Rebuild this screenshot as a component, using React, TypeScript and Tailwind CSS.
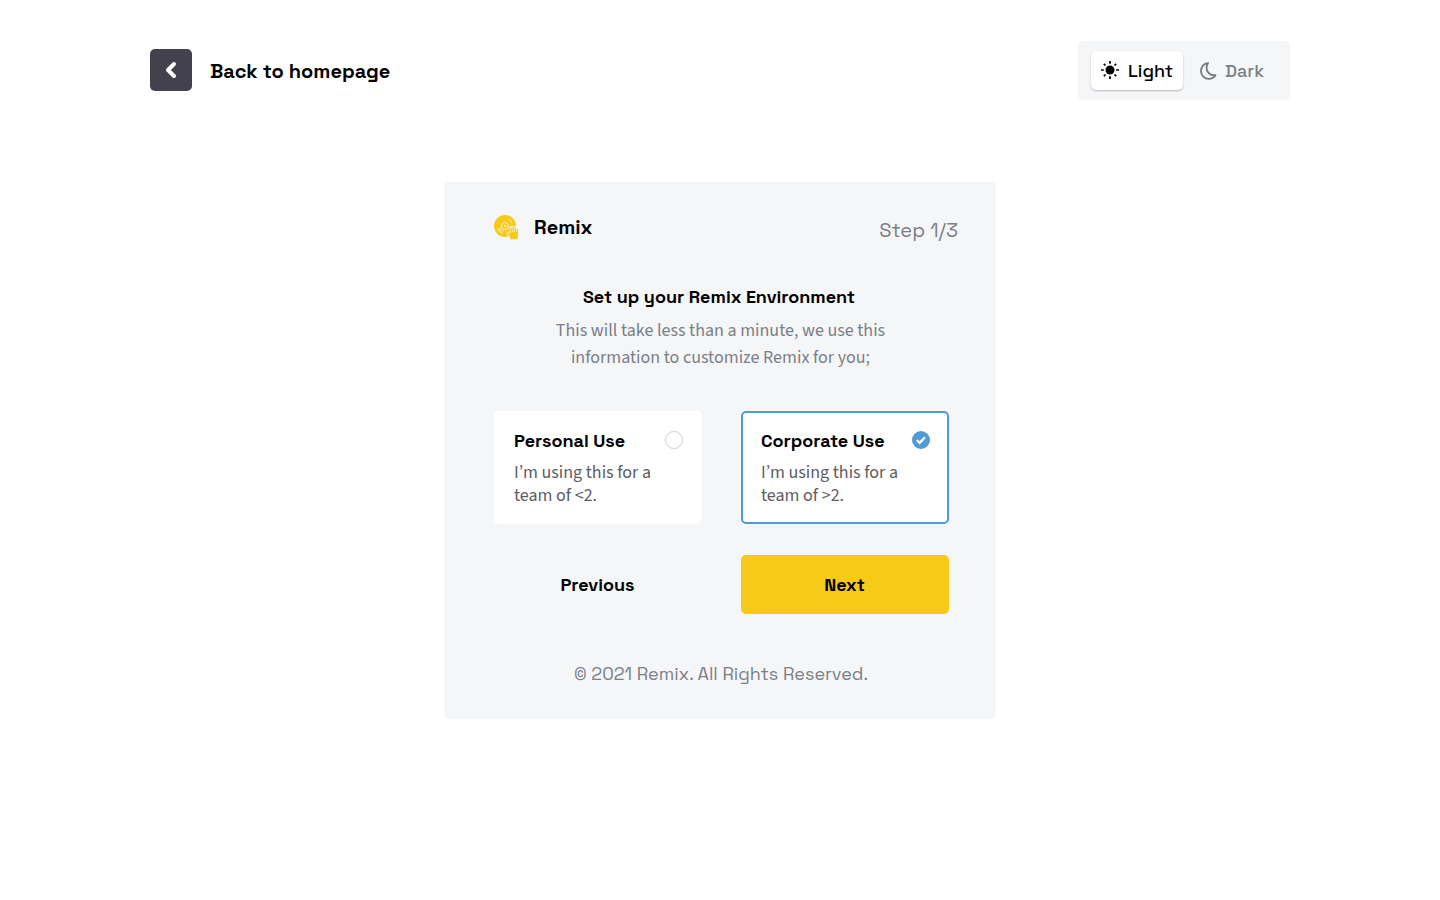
import React from 'react';

const grotesk = "font-['Space_Grotesk',Inter,sans-serif]";
const source = "font-['Source_Sans_Pro','Source_Sans_3','Noto_Sans_CJK_SC',sans-serif]";

function SunIcon() {
  return (
    <svg width="18" height="18" viewBox="0 0 18 18" fill="none" stroke="#000" strokeWidth="1.7" className="mb-[2px]">
      <circle cx="9" cy="9" r="4.5" fill="#000" stroke="none" />
      <path d="M9 0v2.8M9 15.2V18M0 9h2.8M15.2 9H18M2.8 2.8l1.7 1.7M13.5 13.5l1.7 1.7M2.8 15.2l1.7-1.7M13.5 4.5l1.7-1.7" />
    </svg>
  );
}

function MoonIcon() {
  return (
    <svg width="17" height="18" viewBox="0 0 17 18" fill="none" stroke="#747981" strokeWidth="1.8" strokeLinejoin="round">
      <path d="M8.1 1.100C3.900 1.400 1 4.800 1 8.900c0 4.500 3.500 8 7.800 8 2.900 0 5.200-1.300 6.700-3.700-3.300.300-6.200-.900-7.800-3.500C6.100 7 6.300 3.800 8.100 1.100Z" />
    </svg>
  );
}

function RemixLogo() {
  return (
    <svg width="25" height="25" viewBox="0 0 25 25" fill="none">
      <circle cx="11" cy="11" r="11" fill="#f8ca18" />
      <g stroke="#f5f6f8" strokeWidth=".85">
        <circle cx="11" cy="11" r="3.500" />
        <path d="M3.700 13.300a7.700 7.700 0 0 0 5 5M5.800 12.800a5.500 5.500 0 0 0 3.400 3.400M14 3.900a7.700 7.700 0 0 1 4.100 4.100" />
      </g>
      <circle cx="11" cy="11" r="1.100" fill="#f5f6f8" />
      <path
        d="M16.200 24.200v-1.500l-2.900-4c-.7-1.200.8-2.200 1.700-1.100l1.200 1.300v-7.200h7.600v8.800c0 1.200-.4 1.700-.4 2.500v1.200Z"
        fill="#f5f6f8"
        stroke="#f5f6f8"
        strokeWidth="1"
        strokeLinejoin="round"
      />
      <path
        d="M16.300 24.200v-1.500l-2.700-4c-.5-.9.600-1.600 1.300-.8l1.600 1.700v-2.600h7.400v3.500c0 1.200-.4 1.700-.4 2.500v1.200Z"
        fill="#f8ca18"
      />
      <path d="M17.200 18v-4.900M19.200 18v-5.800M21.200 18v-5.400M23.200 18v-3.500" stroke="#f8ca18" strokeWidth="1.350" strokeLinecap="round" />
    </svg>
  );
}

function UseCard({ title, team, selected }: { title: string; team: string; selected?: boolean }) {
  return (
    <button
      className={
        selected
          ? 'flex h-[113px] w-[208px] flex-col rounded-[5px] border-2 border-[#4f9bd5] bg-white pt-[17px] pr-[17px] pl-[18px] text-left'
          : 'flex h-[113px] w-[208px] flex-col rounded-[5px] bg-white pt-[19px] pr-[19px] pl-5 text-left'
      }
    >
      <span className="flex w-full items-start justify-between">
        <span className={`${grotesk} text-[18px] leading-[22px] font-bold whitespace-nowrap`}>{title}</span>
        {selected ? (
          <svg width="18" height="18" viewBox="0 0 18 18" fill="none" className="mt-px">
            <circle cx="9" cy="9" r="9" fill="#4f9bd5" />
            <path d="m4.800 9 2.800 2.800 5.400-5.500" stroke="#fff" strokeWidth="2.300" />
          </svg>
        ) : (
          <span className="mt-px size-[18px] rounded-full border border-[#cfcfcf]" />
        )}
      </span>
      <span className={`${source} mt-[9px] text-[18px] leading-[23px] whitespace-nowrap text-[#5d5d5f]`}>
        I’m using this for a<br />
        {team}
      </span>
    </button>
  );
}

export default function App() {
  return (
    <div className={`${grotesk} h-[900px] w-full overflow-hidden bg-white text-black`}>
      <header className="flex items-center justify-between px-[150px] pt-[41px]">
        <a className="flex items-center gap-[18px]">
          <span className="mb-[2px] flex size-[42px] items-center justify-center rounded-[5px] bg-[#42414d]">
            <svg width="12" height="18" viewBox="0 0 12 18" fill="none" stroke="#fff" strokeWidth="4" strokeLinecap="round" strokeLinejoin="round">
              <path d="m9 3-6 6 6 6" />
            </svg>
          </span>
          <span className="text-[20px] leading-6 font-semibold whitespace-nowrap">Back to homepage</span>
        </a>
        <div className="flex h-[59px] w-[212px] items-center rounded-[5px] bg-[#f5f6f8] pl-[13px] text-[18px] font-medium">
          <button className="flex h-[39px] w-[92px] items-center gap-[9px] rounded-[5px] bg-white pl-[10px] shadow-[0_1px_2px_rgba(0,0,0,0.25)]">
            <SunIcon />
            <span>Light</span>
          </button>
          <button className="ml-[17px] flex items-center gap-[8px] text-[#7b7f87]">
            <MoonIcon />
            <span>Dark</span>
          </button>
        </div>
      </header>

      <main className="mx-auto mt-[82px] flex h-[537px] w-[552px] flex-col rounded-[5px] bg-[#f5f6f8] pr-[47px] pl-[50px]">
        <div className="mr-[-9px] flex items-start justify-between pt-[33px]">
          <div className="flex h-6 items-center gap-[15px]">
            <RemixLogo />
            <span className="text-[20px] leading-6 font-semibold">Remix</span>
          </div>
          <span className="mt-[3px] text-[20px] leading-6 whitespace-nowrap text-[#7b7f87]">Step 1/3</span>
        </div>

        <div className="mt-[42px] mr-[2px] text-center">
          <h1 className="mr-[3px] text-[18px] leading-[26px] font-bold whitespace-nowrap">Set up your Remix Environment</h1>
          <p className={`${source} mt-[7px] text-[18px] leading-[27px] whitespace-nowrap text-[#7b7f87]`}>
            This will take less than a minute, we use this
            <br />
            information to customize Remix for you;
          </p>
        </div>

        <div className="mt-[40px] grid grid-cols-[208px_208px] gap-x-[39px] gap-y-[31px]">
          <UseCard title="Personal Use" team="team of <2." />
          <UseCard title="Corporate Use" team="team of >2." selected />
          <button className="h-[59px] pr-px text-[18px] font-bold">Previous</button>
          <button className="h-[59px] rounded-[5px] bg-[#f8ca18] pr-px text-[18px] font-bold">Next</button>
        </div>

        <footer className="mt-[48px] mr-px text-center text-[18px] leading-6 whitespace-nowrap text-[#7b7f87]">© 2021 Remix. All Rights Reserved.</footer>
      </main>
    </div>
  );
}
